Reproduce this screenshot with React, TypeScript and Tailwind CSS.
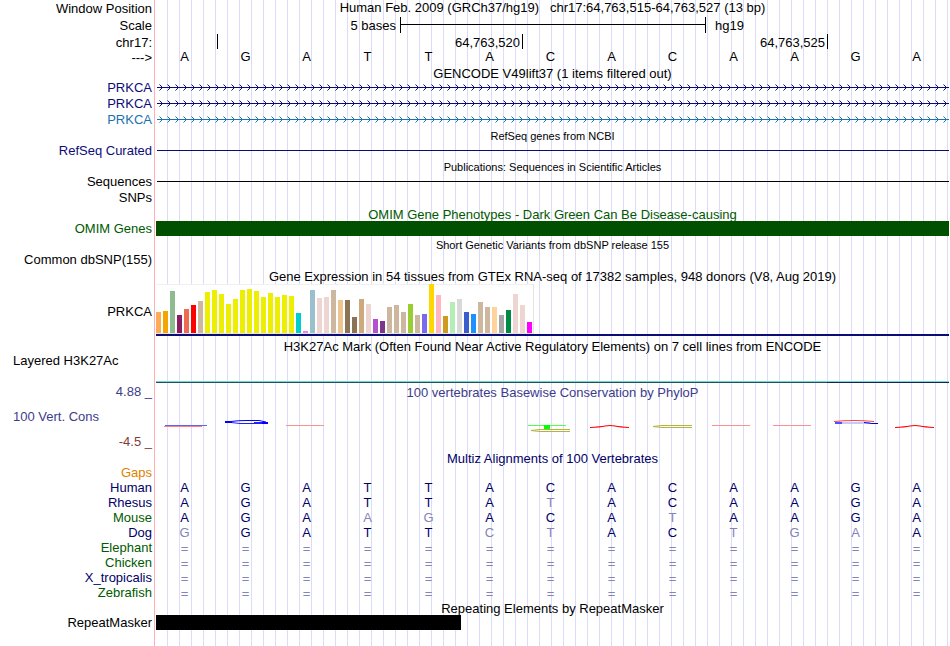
import type { ReactNode } from 'react'
import { clsx } from 'clsx'

const NAVY = 'text-[#0c0c78]'
const DEEP = 'text-[#000066]'
const GREEN = 'text-[#005a00]'

const REFERENCE = 'AGATTACACAAGA'

const GTEX: [number, string][] = [
  [21, '#ffaa56'], [22, '#f5a400'], [42, '#8fbc8f'], [18, '#8b1c62'], [24, '#ee6a50'], [28, '#ff0000'],
  [32, '#cdb79e'], [41, '#eeee00'], [43, '#eeee00'], [39, '#eeee00'], [29, '#eeee00'], [34, '#eeee00'],
  [43, '#eeee00'], [44, '#eeee00'], [42, '#eeee00'], [36, '#eeee00'], [40, '#eeee00'], [36, '#eeee00'],
  [38, '#eeee00'], [37, '#eeee00'], [20, '#00cdcd'], [2, '#ee82ee'], [43, '#9ac0cd'], [35, '#eed5d2'],
  [36, '#eed5d2'], [43, '#cdb79e'], [33, '#eec591'], [33, '#8b7355'], [16, '#8b7355'], [34, '#cdaa7d'],
  [29, '#eed5d2'], [14, '#b452cd'], [12, '#7a378b'], [26, '#cdb79e'], [28, '#cdb79e'], [21, '#cdb79e'],
  [29, '#9acd32'], [18, '#cdb79e'], [19, '#7b68ee'], [49, '#ffd700'], [38, '#ffb6c1'], [17, '#cd9b1d'],
  [31, '#b4eeb4'], [34, '#d9d9d9'], [21, '#3a5fcd'], [19, '#1e90ff'], [31, '#cdb79e'], [26, '#cdb79e'],
  [26, '#ffd39b'], [18, '#a6a6a6'], [23, '#008b45'], [39, '#eed5d2'], [28, '#eed5d2'], [11, '#ff00ff'],
]

const SPECIES = [
  { name: 'Human', bases: 'AGATTACACAAGA', color: DEEP },
  { name: 'Rhesus', bases: 'AGATTATACAAGA', color: DEEP },
  { name: 'Mouse', bases: 'AGAAGACATAAGA', color: GREEN },
  { name: 'Dog', bases: 'GGATTCTACTGAA', color: DEEP },
  { name: 'Elephant', bases: '=============', color: GREEN },
  { name: 'Chicken', bases: '=============', color: GREEN },
  { name: 'X_tropicalis', bases: '=============', color: DEEP },
  { name: 'Zebrafish', bases: '=============', color: GREEN },
]

interface TrackProps {
  label?: ReactNode
  height: string
  color?: string
  left?: boolean
  children?: ReactNode
}

function Track({ label, height, color = 'text-black', left, children }: TrackProps) {
  return (
    <div className={clsx('flex', height)}>
      <div
        className={clsx(
          'w-[155px] shrink-0 border-r border-[#ffb0b0] whitespace-nowrap',
          left ? 'pl-[13px] text-left' : 'pr-[2px] text-right',
          color,
        )}
      >
        {label}
      </div>
      <div className="ml-px min-w-0 flex-1 bg-[linear-gradient(to_right,transparent_11px,#dcdcf6_11px)] bg-size-[12px_100%]">
        {children}
      </div>
    </div>
  )
}

interface TitleProps {
  text: string
  color?: string
  small?: boolean
}

function Title({ text, color, small }: TitleProps) {
  return (
    <h2 className={clsx('pt-px text-center whitespace-pre', small && 'text-[11px] leading-[15px]', color)}>{text}</h2>
  )
}

function Bases({ bases, match }: { bases: string; match?: boolean }) {
  return (
    <div className="grid grid-cols-13">
      {bases.split('').map((base, i) => (
        <span
          key={i}
          className={clsx(
            'pr-1 text-center',
            match && (base === REFERENCE[i] ? 'text-[#000066]' : 'text-[#8484b8]'),
            base === '=' && 'pt-px',
          )}
        >
          {base}
        </span>
      ))}
    </div>
  )
}

function GeneArrows({ id, color }: { id: string; color: string }) {
  return (
    <svg className="block h-4 w-full" aria-hidden="true">
      <defs>
        <pattern id={id} width="8" height="16" patternUnits="userSpaceOnUse">
          <path d="M3.5 4.5 L6.5 7.5 L3.5 10.5" fill="none" stroke={color} />
        </pattern>
      </defs>
      <rect x="1" y="7" width="100%" height="1" fill={color} />
      <rect width="100%" height="16" fill={`url(#${id})`} />
    </svg>
  )
}

function IntronLine({ color }: { color: string }) {
  return <div className={clsx('ml-px h-2 border-b', color)} />
}

function Conservation() {
  return (
    <svg className="block h-[50px] w-full" viewBox="0 0 793 50" preserveAspectRatio="none" fill="none" aria-hidden="true">
      <path d="M8 26.5H46" stroke="#ff8080" />
      <path d="M9 25.5H51" stroke="#6060ff" />
      <path d="M75 21.5Q82 20.5 90 20.5H103L110 22" stroke="#0000ff" />
      <path d="M75 22.5L84 23.5H111M98 22.5H110" stroke="#2020ff" />
      <path d="M69 22H76M106 23H112" stroke="#0000ff" strokeWidth="2" />
      <path d="M130 25.5H168" stroke="#ff9090" />
      <path d="M372 25.5H410" stroke="#50ff50" />
      <rect x="388" y="25" width="6" height="4" fill="#00ff00" />
      <path d="M414 29.5H384L375 30.5L384 31.5H414" stroke="#b4b43c" />
      <path d="M434 27.5Q444 27 449 26Q454 25 459 26Q464 27 473 27.5" stroke="#ff0000" strokeWidth="1.2" />
      <path d="M536 25.5H506L497 26.5L506 27.5H536" stroke="#b4b43c" />
      <path d="M556 25.5H594M617 25.5H655" stroke="#ff9090" />
      <path d="M678 21.5Q688 20.5 698 20.5Q708 20.5 718 21.5" stroke="#ff4040" />
      <path d="M686 23H714" stroke="#c8c8ff" strokeWidth="2" />
      <path d="M679 23H686" stroke="#5050ff" strokeWidth="2" />
      <path d="M708 22.5L716 23.5H722" stroke="#0000e0" />
      <path d="M739 27.5Q749 27 754 26Q759 25 764 26Q769 27 778 27.5" stroke="#ff0000" strokeWidth="1.2" />
    </svg>
  )
}

export default function App() {
  return (
    <main className="overflow-hidden bg-white pr-px font-['Liberation_Sans',Arial,sans-serif] text-[13px] leading-[15px] text-black">
      <Track label="Window Position" height="h-[17px] leading-[17px]">
        <h1 className="text-center leading-[15px] whitespace-pre">
          {'Human Feb. 2009 (GRCh37/hg19)   chr17:64,763,515-64,763,527 (13 bp)'}
        </h1>
      </Track>
      <Track label="Scale" height="h-[17px] leading-[17px]">
        <div className="grid grid-cols-13">
          <span className="col-span-4 h-4 pr-1 text-right">5 bases</span>
          <div className="col-span-5 h-4 border-l border-black">
            <div className="h-2 border-b border-black" />
          </div>
          <span className="col-span-4 h-4 border-l border-black pl-[9px]">hg19</span>
        </div>
      </Track>
      <Track label="chr17:" height="h-[15px] leading-[17px]">
        <div className="grid grid-cols-13">
          <span className="h-[15px]" />
          <span className="col-span-5 h-[15px] border-l border-black pr-[2px] text-right">64,763,520</span>
          <span className="col-span-5 h-[15px] border-l border-black pr-[2px] text-right">64,763,525</span>
          <span className="col-span-2 h-[15px] border-l border-black" />
        </div>
      </Track>
      <Track label={<div className="pt-px">{'--->'}</div>} height="h-4">
        <Bases bases={REFERENCE} />
      </Track>

      <Track height="h-[15px]">
        <Title text="GENCODE V49lift37 (1 items filtered out)" />
      </Track>
      <Track label="PRKCA" height="h-4" color={NAVY}>
        <GeneArrows id="arrows-a" color="#0c0c78" />
      </Track>
      <Track label="PRKCA" height="h-4" color={NAVY}>
        <GeneArrows id="arrows-b" color="#0c0c78" />
      </Track>
      <Track label="PRKCA" height="h-4" color="text-[#1a73ad]">
        <GeneArrows id="arrows-c" color="#1a73ad" />
      </Track>

      <Track height="h-[15px]">
        <Title small text="RefSeq genes from NCBI" />
      </Track>
      <Track label="RefSeq Curated" height="h-4" color={NAVY}>
        <IntronLine color="border-[#0c0c78]" />
      </Track>
      <Track height="h-[15px]">
        <Title small text="Publications: Sequences in Scientific Articles" />
      </Track>
      <Track label="Sequences" height="h-4">
        <IntronLine color="border-black" />
      </Track>
      <Track label="SNPs" height="h-4" />

      <Track height="h-[15px]">
        <Title text="OMIM Gene Phenotypes - Dark Green Can Be Disease-causing" color={GREEN} />
      </Track>
      <Track label="OMIM Genes" height="h-[15px]" color={GREEN}>
        <div className="h-full bg-[#005000]" />
      </Track>
      <Track height="h-4">
        <div className="pt-px">
          <Title small text="Short Genetic Variants from dbSNP release 155" />
        </div>
      </Track>
      <Track label="Common dbSNP(155)" height="h-4" />

      <Track height="h-4">
        <Title text="Gene Expression in 54 tissues from GTEx RNA-seq of 17382 samples, 948 donors (V8, Aug 2019)" />
      </Track>
      <Track label={<div className="pt-5">PRKCA</div>} height="h-[54px]">
        <div className="border-b-2 border-[#0c0c78]">
          <div className="flex h-[50px] w-[378px] items-end gap-[2px] border-r border-b border-[#e4e4e4] bg-white shadow-[inset_0_1px_#f0f0f0]">
            {GTEX.map(([height, color], i) => (
              <div key={i} className="w-[5px] shrink-0" style={{ height, backgroundColor: color }} />
            ))}
          </div>
        </div>
      </Track>

      <Track height="h-[15px]">
        <Title text="H3K27Ac Mark (Often Found Near Active Regulatory Elements) on 7 cell lines from ENCODE" />
      </Track>
      <Track label="Layered H3K27Ac" height="h-[31px]" left>
        <div className="grid grid-cols-13 pt-7">
          <div className="col-span-11 h-[2px] border-t border-[#6edcc8] bg-[#1f4f62]" />
          <div className="col-span-2 h-[2px] border-t border-[#6edcc8] bg-[#14245c]" />
        </div>
      </Track>

      <Track
        label={
          <div className="flex h-[65px] flex-col justify-between">
            <span>4.88 _</span>
            <span className="pl-[13px] text-left">100 Vert. Cons</span>
            <span className="text-[#823c3c]">-4.5 _</span>
          </div>
        }
        height="h-[66px]"
        color="text-[#3c3c8c]"
      >
        <Title text="100 vertebrates Basewise Conservation by PhyloP" color="text-[#3c3c8c]" />
        <Conservation />
      </Track>

      <Track height="h-[15px]">
        <Title text="Multiz Alignments of 100 Vertebrates" color={DEEP} />
      </Track>
      <Track label="Gaps" height="h-[15px]" color="text-[#e08200]" />
      {SPECIES.map((s) => (
        <Track key={s.name} label={s.name} height="h-[15px]" color={s.color}>
          <Bases bases={s.bases} match />
        </Track>
      ))}

      <Track height="h-[15px]">
        <Title text="Repeating Elements by RepeatMasker" />
      </Track>
      <Track label="RepeatMasker" height="h-[15px]">
        <div className="grid h-full grid-cols-13">
          <div className="col-span-5 bg-black" />
        </div>
      </Track>
      <Track height="h-4" />
    </main>
  )
}
